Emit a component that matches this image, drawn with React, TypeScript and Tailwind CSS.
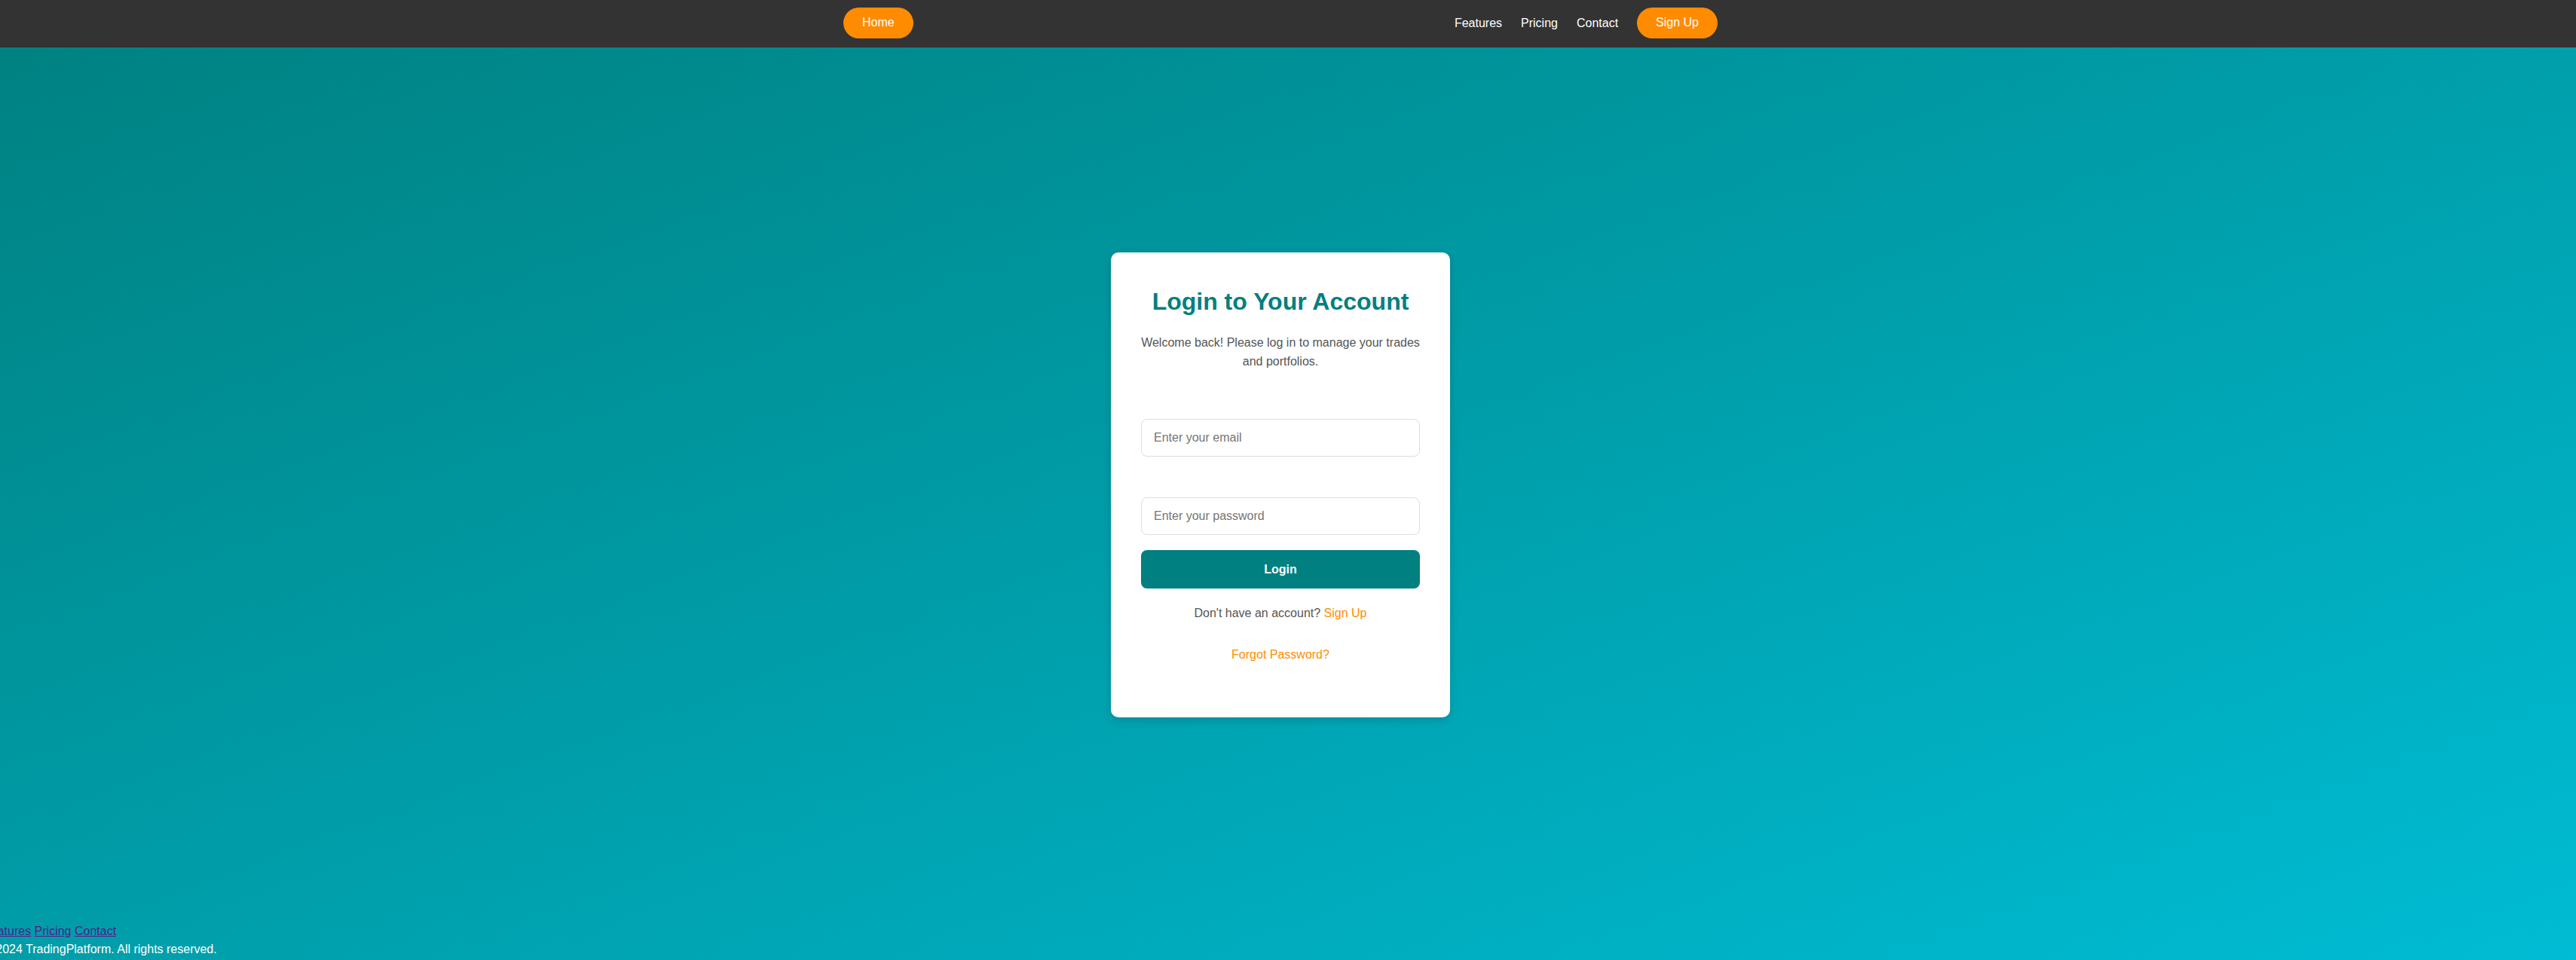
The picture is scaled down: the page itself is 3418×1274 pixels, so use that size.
import React, { useState } from "react";

const App: React.FC = () => {
  const [email, setEmail] = useState("");
  const [password, setPassword] = useState("");

  const handleSubmit = (e: React.FormEvent) => {
    e.preventDefault();
  };

  return (
    <div
      className="min-h-screen flex flex-col bg-linear-to-br from-[#008080] to-[#00bcd4] text-[16px]"
      style={{ fontFamily: '"Liberation Sans", Arial, sans-serif' }}
    >
      {/* navbar */}
      <nav className="h-[63px] bg-[#333333] pr-[20px]">
        <div className="mx-auto w-[1160px] h-full flex justify-between items-start pt-[10px]">
          <a
            href="#"
            className="block bg-[#ff8c00] text-white px-[25px] py-[11px] leading-[18.5px] rounded-full"
          >
            Home
          </a>
          <div className="flex items-center gap-[25px] h-[41px]">
            <a href="#" className="text-white leading-[18px]">Features</a>
            <a href="#" className="text-white leading-[18px]">Pricing</a>
            <a href="#" className="text-white leading-[18px]">Contact</a>
            <a
              href="#"
              className="block bg-[#ff8c00] text-white px-[25px] py-[11px] leading-[18.5px] rounded-full"
            >
              Sign Up
            </a>
          </div>
        </div>
      </nav>

      {/* main */}
      <main className="flex-1 flex items-center justify-center pr-[20px]">
        <div className="w-[450px] bg-white rounded-[10px] shadow-[0_4px_12px_rgba(0,0,0,0.15)] px-[40px] pt-[47px] pb-[71px] text-center">
          <h2 className="text-[32px] leading-[37px] font-bold text-[#008080]">
            Login to Your Account
          </h2>
          <p className="mt-[23px] text-[#555555] leading-[25.6px]">
            Welcome back! Please log in to manage your trades and portfolios.
          </p>
          <form onSubmit={handleSubmit} className="mt-[63px] flex flex-col">
            <input
              type="email"
              value={email}
              onChange={(e) => setEmail(e.target.value)}
              placeholder="Enter your email"
              className="h-[50px] w-full px-[16px] border border-[#dddddd] rounded-[8px] text-[16px] text-[#333333] placeholder:text-[#757575] outline-none"
            />
            <input
              type="password"
              value={password}
              onChange={(e) => setPassword(e.target.value)}
              placeholder="Enter your password"
              className="mt-[54px] h-[50px] w-full px-[16px] border border-[#dddddd] rounded-[8px] text-[16px] text-[#333333] placeholder:text-[#757575] outline-none"
            />
            <button
              type="submit"
              className="mt-[20px] h-[51px] w-full rounded-[8px] bg-[#008080] text-white font-bold text-[16px]"
            >
              Login
            </button>
          </form>
          <p className="mt-[20px] text-[#555555] leading-[25.6px]">
            Don't have an account?{" "}
            <a href="#" className="text-[#ff8c00]">Sign Up</a>
          </p>
          <p className="mt-[29px] leading-[25.6px]">
            <a href="#" className="text-[#ff8c00]">Forgot Password?</a>
          </p>
        </div>
      </main>

      {/* footer */}
      <footer className="-ml-[22px] pb-[2px] text-white leading-[24px]">
        <div>
          <a href="#" className="text-[#551a8b] underline">Features</a>{" "}
          <a href="#" className="text-[#551a8b] underline">Pricing</a>{" "}
          <a href="#" className="text-[#551a8b] underline">Contact</a>
        </div>
        <p>© 2024 TradingPlatform. All rights reserved.</p>
      </footer>
    </div>
  );
};

export default App;
